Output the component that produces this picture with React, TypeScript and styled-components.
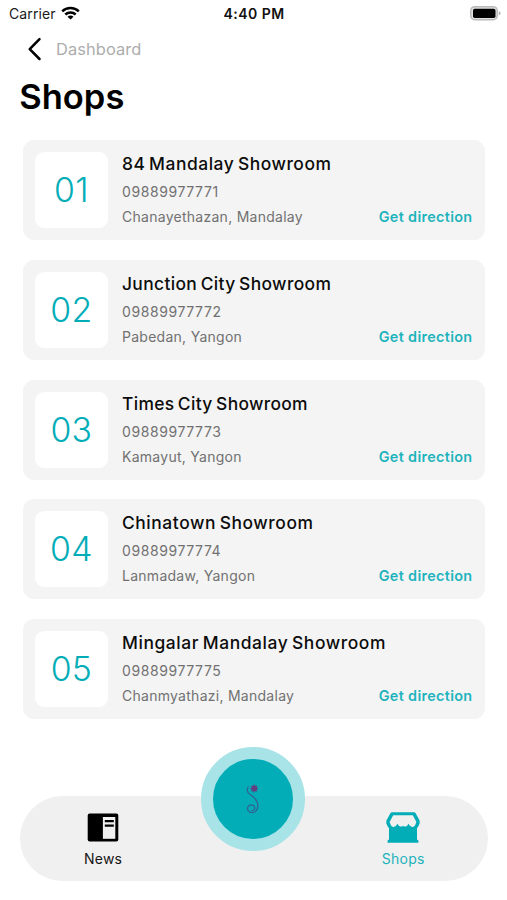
import React from "react";
import styled, { createGlobalStyle } from "styled-components";

const TEAL = "#02adb8";

const GlobalStyle = createGlobalStyle`
  body {
    margin: 0;
    background: #fff;
    font-family: Inter, "Liberation Sans", sans-serif;
    color: #000;
  }
`;

const Screen = styled.div`
  box-sizing: border-box;
  width: 100%;
  height: 900px;
  display: flex;
  flex-direction: column;
  overflow: hidden;
  background: #fff;
`;

const StatusBar = styled.header`
  display: grid;
  grid-template-columns: 1fr auto 1fr;
  align-items: center;
  height: 27px;
  padding: 0 6px 0 9px;
  font-size: 14px;
  line-height: 27px;
`;

const Carrier = styled.div`
  display: flex;
  align-items: center;
  gap: 5.5px;
  letter-spacing: 0.12px;
  color: #1a1a1a;

  svg {
    margin-top: -1px;
  }
`;

const Clock = styled.time`
  font-weight: 600;
  letter-spacing: 0.48px;
  color: #111;
  margin-right: 2px;
`;

const BatterySlot = styled.div`
  display: flex;
  justify-content: flex-end;
`;

const BackLink = styled.nav`
  display: flex;
  align-items: center;
  gap: 14px;
  height: 44px;
  padding-left: 27px;
  font-size: 16.4px;
  letter-spacing: 0.1px;
  color: #adadad;
`;

const Heading = styled.h1`
  margin: 0 0 17px;
  padding-left: 19.3px;
  height: 52px;
  line-height: 52px;
  font-size: 34.5px;
  font-weight: 600;
`;

const ShopList = styled.ul`
  list-style: none;
  margin: 0;
  padding: 0 22px 0 23px;
  display: flex;
  flex-direction: column;
  gap: 19.77px;
`;

const ShopCard = styled.li`
  box-sizing: border-box;
  display: flex;
  gap: 13.7px;
  height: 100px;
  padding: 12px 12.5px 12px 12.3px;
  border-radius: 11px;
  background: #f4f4f4;
`;

const NumberTile = styled.div`
  flex: none;
  box-sizing: border-box;
  width: 73px;
  height: 76px;
  padding-right: 0.8px;
  line-height: 76px;
  border-radius: 9px;
  background: #fff;
  color: ${TEAL};
  font-size: 33.8px;
  font-weight: 350;
  letter-spacing: 0.3px;
  text-align: center;
`;

const Details = styled.div`
  flex: 1;
  margin-top: -2px;
  font-size: 14px;
  color: #717171;
  white-space: nowrap;
`;

const ShopName = styled.h2<{ $tracking: number }>`
  margin: 0;
  font-size: 17.4px;
  font-weight: 500;
  line-height: 28px;
  letter-spacing: ${(p) => p.$tracking}px;
  word-spacing: -1.5px;
  color: #0c0c0c;
`;

const Phone = styled.div`
  line-height: 28px;
  letter-spacing: 0.6px;
`;

const AddressRow = styled.div`
  display: flex;
  justify-content: space-between;
  line-height: 22px;
  letter-spacing: 0.27px;
`;

const Direction = styled.a`
  color: #1eb3bd;
  font-size: 14.4px;
  font-weight: 600;
  letter-spacing: 0.33px;
`;

const TabBar = styled.footer`
  position: relative;
  display: grid;
  grid-template-columns: 166.6px 1fr 169px;
  width: 468px;
  height: 85px;
  margin: 77.3px 0 0 19.8px;
  border-radius: 42.5px;
  background: #f0f0f0;
`;

const Tab = styled.a<{ $active?: boolean }>`
  display: flex;
  flex-direction: column;
  align-items: center;
  padding-top: 15px;
  gap: 5px;
  font-size: 14px;
  line-height: 22px;
  letter-spacing: 0.25px;
  color: ${(p) => (p.$active ? "#24b2bc" : "#161616")};

  svg {
    display: block;
  }
`;

const HomeButton = styled.button`
  position: absolute;
  left: 181.5px;
  top: -49.5px;
  box-sizing: border-box;
  width: 104px;
  height: 104px;
  padding: 0;
  display: flex;
  align-items: center;
  justify-content: center;
  border: 12px solid #a8e3e7;
  border-radius: 50%;
  background: ${TEAL};
`;

const WifiIcon = () => (
  <svg width="19" height="14" viewBox="0 0 19 14">
    <g fill="none" stroke="#000" strokeWidth="2.5">
      <path d="M1.2 5.3C5.8.8 13.2.8 17.8 5.3" />
      <path d="M4.3 8.5C7.3 5.7 11.7 5.7 14.7 8.5" />
    </g>
    <path d="M9.5 13.6 6.5 10.7C8.2 9.2 10.8 9.2 12.5 10.7Z" />
  </svg>
);

const BatteryIcon = () => (
  <svg width="31" height="15" viewBox="0 0 31 15">
    <rect x="0.8" y="0.7" width="26.4" height="13" rx="3.8" fill="#e2e2e2" stroke="#bababa" strokeWidth="1.5" />
    <rect x="3" y="2.7" width="22.5" height="9.2" rx="1.7" />
    <path d="M28.7 5Q30.6 5.8 30.6 7.2Q30.6 8.6 28.7 9.4Z" fill="#b5b5b5" />
  </svg>
);

const ChevronIcon = () => (
  <svg width="15" height="24" viewBox="0 0 15 24">
    <path
      d="M12.5 2.2 2.7 12.2 12.5 22"
      fill="none"
      stroke="#000"
      strokeWidth="2.5"
      strokeLinecap="round"
      strokeLinejoin="round"
    />
  </svg>
);

const NewsIcon = () => (
  <svg width="34" height="32" viewBox="0 0 34 32">
    <rect x="1.7" y="2.4" width="30.6" height="28.2" rx="2" />
    <rect x="16.9" y="6" width="12.4" height="21.8" fill="#f0f0f0" />
    <path d="M18.8 10.2h9M18.8 14.7h9" stroke="#000" strokeWidth="2.3" />
  </svg>
);

const StoreIcon = () => (
  <svg width="34" height="32" viewBox="0 0 34 32" fill={TEAL}>
    <path
      fillRule="evenodd"
      d="M5.7 1.2H28.3L29.5 1.9 33.6 9.5 33.7 12.5 32 15.9 31 17V28.5L32.4 29.6V31.7H1.6V29.6L3 28.5V17L2 15.9.3 12.5.4 9.5 4.5 1.9ZM7.2 4.3 3.6 11 5 14.6Q6.300 16.500 8.300 15.800Q10.200 15 11.500 12.700Q12.900 15.200 14.200 15.500Q15.800 15.900 17 14.700Q18.200 15.900 19.800 15.500Q21.100 15.200 22.500 12.700Q23.800 15 25.700 15.800Q27.700 16.500 29 14.600L30.400 11 26.800 4.300Z"
    />
  </svg>
);

const FlowerIcon = () => (
  <svg width="16" height="34" viewBox="0 0 16 34">
    <path
      d="M3.2 5C1.8 7.8 2 10 4 11.6C7 14 13 17 13 23.5C13 28 10 30.8 6.7 30.6C3.3 30.3 1.8 27.3 3 24.8C4.5 22 8.8 22.2 9.7 25C10.2 27.2 8.5 28.8 6.8 28.5"
      fill="none"
      stroke="#335e91"
      strokeWidth="1.2"
      strokeLinecap="round"
    />
    <circle cx="9.2" cy="6.5" r="2.9" fill="#5f3c86" />
    <path
      d="M9.2 2.5v8M5.2 6.5h8M6.4 3.7l5.6 5.6M12 3.7 6.4 9.3"
      stroke="#62407f"
      strokeWidth="1.1"
    />
  </svg>
);

const shops = [
  { number: "01", name: "84 Mandalay Showroom", phone: "09889977771", address: "Chanayethazan, Mandalay", tracking: 0.54 },
  { number: "02", name: "Junction City Showroom", phone: "09889977772", address: "Pabedan, Yangon", tracking: 0.37 },
  { number: "03", name: "Times City Showroom", phone: "09889977773", address: "Kamayut, Yangon", tracking: 0.33 },
  { number: "04", name: "Chinatown Showroom", phone: "09889977774", address: "Lanmadaw, Yangon", tracking: 0.58 },
  { number: "05", name: "Mingalar Mandalay Showroom", phone: "09889977775", address: "Chanmyathazi, Mandalay", tracking: 0.59 },
];

export default function App() {
  return (
    <Screen>
      <GlobalStyle />
      <StatusBar>
        <Carrier>
          Carrier
          <WifiIcon />
        </Carrier>
        <Clock>4:40 PM</Clock>
        <BatterySlot>
          <BatteryIcon />
        </BatterySlot>
      </StatusBar>
      <BackLink>
        <ChevronIcon />
        Dashboard
      </BackLink>
      <Heading>Shops</Heading>
      <ShopList>
        {shops.map((shop) => (
          <ShopCard key={shop.number}>
            <NumberTile>{shop.number}</NumberTile>
            <Details>
              <ShopName $tracking={shop.tracking}>{shop.name}</ShopName>
              <Phone>{shop.phone}</Phone>
              <AddressRow>
                <span>{shop.address}</span>
                <Direction>Get direction</Direction>
              </AddressRow>
            </Details>
          </ShopCard>
        ))}
      </ShopList>
      <TabBar>
        <Tab>
          <NewsIcon />
          News
        </Tab>
        <span />
        <Tab $active>
          <StoreIcon />
          Shops
        </Tab>
        <HomeButton aria-label="Home">
          <FlowerIcon />
        </HomeButton>
      </TabBar>
    </Screen>
  );
}
